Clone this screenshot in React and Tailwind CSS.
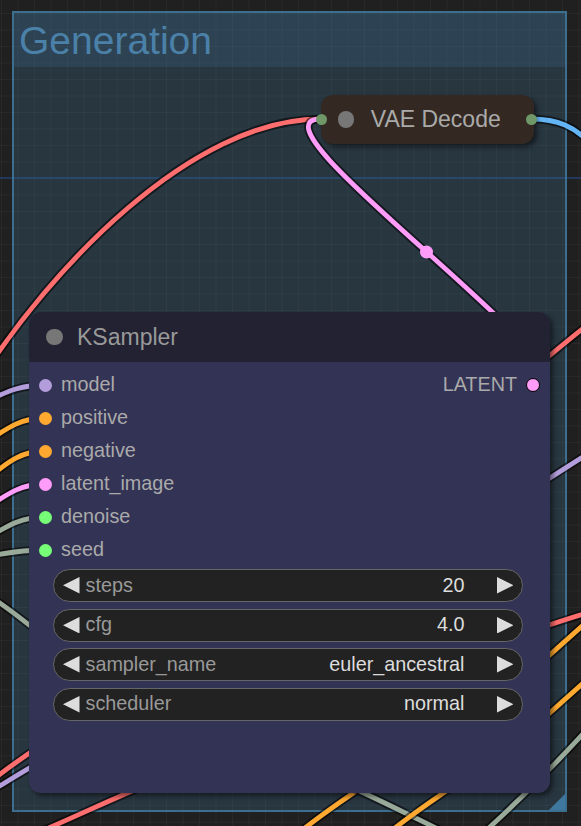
import React from "react";

const FONT = '"Liberation Sans", Arial, sans-serif';

const RED = "#FF6E6E";
const LAV = "#B39DDB";
const ORA = "#FFA931";
const PINK = "#FF9CF9";
const GG = "#9aaa9a";
const BLUE = "#64B5F6";

function Wire({ d, color }) {
  return (
    <g>
      <path d={d} stroke="rgba(0,0,0,0.55)" strokeWidth="8.5" fill="none" strokeLinecap="round" />
      <path d={d} stroke={color} strokeWidth="4.8" fill="none" strokeLinecap="round" />
    </g>
  );
}

function leftIn(y, d) {
  return `M -60 ${y + 2.4 * d} C -10 ${y + 2 * d}, 0 ${y}, 45 ${y}`;
}

const wires = [
  { d: "M -20 380 C 50 270, 190 119, 321 119", c: RED },
  { d: "M 531 119 C 585 119, 600 150, 640 230", c: BLUE },
  { d: "M 533 385 C 618 385, 235 119, 321 119", c: PINK },
  { d: leftIn(385, 12), c: LAV },
  { d: leftIn(418, 18), c: ORA },
  { d: leftIn(451, 21), c: ORA },
  { d: leftIn(484, 18), c: PINK },
  { d: leftIn(517, 16), c: GG },
  { d: leftIn(550, 5), c: GG },
  { d: "M -30 584 C 10 606, 60 650, 120 700", c: GG },
  { d: "M -20 790 C 10 765, 40 745, 80 720", c: RED },
  { d: "M -20 798 C 10 780, 40 760, 80 740", c: LAV },
  { d: "M 30 836 C 80 815, 120 795, 170 775", c: RED },
  { d: "M 295 836 C 320 815, 350 795, 380 775", c: ORA },
  { d: "M 340 782 C 380 800, 420 820, 470 845", c: GG },
  { d: "M 385 836 C 410 815, 440 795, 470 775", c: ORA },
  { d: "M 480 836 C 520 800, 560 760, 600 715", c: GG },
  { d: "M 510 388 C 540 364, 570 338, 600 315", c: RED },
  { d: "M 510 504 C 540 484, 570 465, 600 446", c: LAV },
  { d: "M 510 638 C 540 628, 570 618, 600 609", c: RED },
  { d: "M 510 690 C 540 664, 570 637, 600 610", c: ORA },
  { d: "M 510 748 C 540 722, 570 695, 600 668", c: ORA },
];

function Tri({ dir }) {
  return (
    <svg width="16.5" height="16.5" viewBox="0 0 16.5 16.5" className="shrink-0">
      {dir === "left" ? (
        <polygon points="0,8.25 16.5,0 16.5,16.5" fill="#dddddd" />
      ) : (
        <polygon points="16.5,8.25 0,0 0,16.5" fill="#dddddd" />
      )}
    </svg>
  );
}

function Widget({ label, value }) {
  return (
    <div className="h-[33px] rounded-full bg-[#222222] border border-[#666666] flex items-center">
      <div className="ml-[9px] flex items-center">
        <Tri dir="left" />
      </div>
      <span className="ml-[6px] text-[19.8px] leading-none text-[#999999]">{label}</span>
      <span className="ml-auto text-[19.8px] leading-none text-[#dddddd]">{value}</span>
      <div className="ml-[32px] mr-[9px] flex items-center">
        <Tri dir="right" />
      </div>
    </div>
  );
}

function InRow({ color, label, children }) {
  return (
    <div className="h-[33px] flex items-center">
      <div className="ml-[10px] w-[13px] h-[13px] rounded-full shrink-0" style={{ backgroundColor: color }} />
      <span className="ml-[9px] text-[19.8px] leading-none text-[#aaaaaa]">{label}</span>
      {children}
    </div>
  );
}

export default function App() {
  return (
    <div
      className="relative w-[581px] h-[826px] overflow-hidden bg-[#202020] bg-[linear-gradient(to_right,rgba(255,255,255,0.035)_1px,transparent_1px),linear-gradient(to_bottom,rgba(255,255,255,0.035)_1px,transparent_1px)] bg-[size:16.5px_16.5px] bg-[position:1px_13px]"
      style={{ fontFamily: FONT }}
    >
      <div className="absolute left-0 right-0 top-[177px] h-[2px] bg-[#22395a]" />

      {/* Group */}
      <div className="absolute left-[12px] top-[11px] w-[555px] h-[801px] border-2 border-[#3f789e]/85 bg-[#3f789e]/25 flex flex-col">
        <div className="h-[54px] bg-[#3f789e]/20 flex items-center pl-[5px]">
          <span className="text-[39px] leading-none text-[#4b81a9]">Generation</span>
        </div>
        <div className="flex-1 relative">
          <svg width="16" height="16" viewBox="0 0 16 16" className="absolute right-0 bottom-0">
            <polygon points="16,0 16,16 0,16" fill="#3f789e" />
          </svg>
        </div>
      </div>

      {/* Wires */}
      <svg width="581" height="826" viewBox="0 0 581 826" className="absolute left-0 top-0">
        {wires.map((w, i) => (
          <Wire key={i} d={w.d} color={w.c} />
        ))}
        <circle cx="426.5" cy="252" r="6.5" fill={PINK} />
      </svg>

      {/* VAE Decode (collapsed) */}
      <div className="absolute left-[321px] top-[94.5px] w-[213px] h-[49.5px] rounded-[12px] bg-[#332922] shadow-[3px_3px_5px_rgba(0,0,0,0.5)] flex items-center">
        <div className="ml-[16.75px] w-[16.5px] h-[16.5px] rounded-full bg-[#777777] shrink-0" />
        <span className="ml-[16.5px] text-[23px] leading-none text-[#aaaaaa]">VAE Decode</span>
        <div className="absolute left-[-5px] top-[19px] w-[11px] h-[11px] rounded-full bg-[#6f9767]" />
        <div className="absolute left-[205px] top-[19px] w-[11px] h-[11px] rounded-full bg-[#6f9767]" />
      </div>

      {/* KSampler */}
      <div className="absolute left-[29px] top-[312px] w-[521px] h-[481px] rounded-[12px] bg-[#333355] shadow-[3px_3px_5px_rgba(0,0,0,0.5)] flex flex-col">
        <div className="h-[50px] rounded-t-[12px] bg-[#222233] flex items-center shrink-0">
          <div className="ml-[17px] w-[16.5px] h-[16.5px] rounded-full bg-[#777777] shrink-0" />
          <span className="ml-[14.5px] text-[23px] leading-none text-[#999999]">KSampler</span>
        </div>
        <div className="pt-[6.5px] flex flex-col">
          <InRow color={LAV} label="model">
            <span className="ml-auto text-[19.8px] leading-none text-[#aaaaaa]">LATENT</span>
            <div className="ml-[9px] mr-[10px] w-[14px] h-[14px] rounded-full bg-[#FF9CF9] border-[1.5px] border-black shrink-0" />
          </InRow>
          <InRow color={ORA} label="positive" />
          <InRow color={ORA} label="negative" />
          <InRow color={PINK} label="latent_image" />
          <InRow color="#77ff77" label="denoise" />
          <InRow color="#77ff77" label="seed" />
        </div>
        <div className="mt-[2.5px] ml-[24px] mr-[27px] flex flex-col gap-[6.6px]">
          <Widget label="steps" value="20" />
          <Widget label="cfg" value="4.0" />
          <Widget label="sampler_name" value="euler_ancestral" />
          <Widget label="scheduler" value="normal" />
        </div>
      </div>
    </div>
  );
}
